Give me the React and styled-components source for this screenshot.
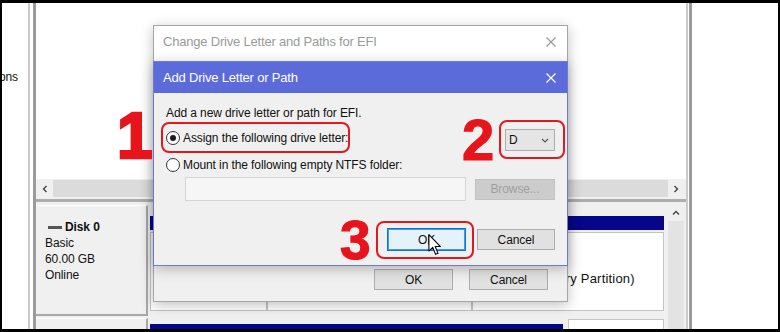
import React from 'react';
import styled, { createGlobalStyle } from 'styled-components';

const GlobalStyle = createGlobalStyle`
  html, body {
    margin: 0;
    padding: 0;
    background: #000;
  }
  body {
    font-family: "Liberation Sans", Arial, sans-serif;
  }
`;

const Screen = styled.div`
  position: relative;
  width: 780px;
  height: 332px;
  box-sizing: border-box;
  padding: 3px 2px;
  background: #000;
  overflow: hidden;
`;

const Desktop = styled.div`
  display: flex;
  height: 100%;
  background: #fff;
  overflow: hidden;
  font-size: 12px;
  letter-spacing: -0.1px;
  color: #111;
`;

const LeftPane = styled.div`
  flex: none;
  width: 26px;
  box-sizing: border-box;
  display: flex;
  justify-content: flex-end;
  align-items: flex-start;
  padding: 67px 10px 0 0;
  overflow: hidden;
  white-space: nowrap;
  line-height: 14px;
`;

const Rule = styled.div`
  flex: none;
  width: ${(p) => p.$w}px;
  box-sizing: border-box;
  border-left: 2px solid #cacaca;
  border-right: 3px solid #9b9b9b;
  background: #fff;
`;

const MainPane = styled.div`
  flex: none;
  width: 650px;
  display: flex;
  flex-direction: column;
`;

const ListView = styled.div`
  height: 176px;
  flex: none;
  background: #fff;
`;

const HScroll = styled.div`
  height: 19px;
  flex: none;
  display: flex;
  background: #f0f0f0;
`;

const ArrowBox = styled.div`
  flex: none;
  width: ${(p) => p.$w || 16}px;
  height: ${(p) => (p.$h ? `${p.$h}px` : 'auto')};
  display: flex;
  align-items: center;
  justify-content: center;
  color: #444;
`;

const Thumb = styled.div`
  flex: 1;
  margin: 1px 0;
  background: #dbdbdb;
`;

const Splitter = styled.div`
  height: 7px;
  flex: none;
  background: linear-gradient(#f0f0f0 0 1px, #adadad 1px 4px, #f0f0f0 4px);
`;

const GraphView = styled.div`
  flex: 1;
  display: flex;
  background: #f0f0f0;
  min-height: 0;
`;

const Rows = styled.div`
  flex: none;
  width: 628px;
  display: flex;
  flex-direction: column;
  gap: 2px;
`;

const DiskRow = styled.div`
  flex: none;
  height: ${(p) => p.$h}px;
  display: flex;
  gap: 2px;
`;

const DiskLabel = styled.div`
  flex: none;
  width: 112px;
  box-sizing: border-box;
  padding: 13px 0 0 9px;
  border-top: 1px solid #fff;
  border-right: 2px solid #a8a8a8;
  border-bottom: 2px solid #a8a8a8;
  background: #f0f0f0;
  line-height: 16px;
`;

const DiskTitle = styled.div`
  display: flex;
  align-items: center;
  gap: 3px;
  font-weight: bold;
`;

const DiskIcon = styled.span`
  width: 14px;
  height: 3px;
  margin-left: 3px;
  background: #555;
`;

const Partitions = styled.div`
  flex: 1;
  display: grid;
  grid-template-columns: ${(p) => p.$cols};
  column-gap: ${(p) => p.$gap || 0}px;
  padding: ${(p) => p.$pad};
`;

const Partition = styled.div`
  display: flex;
  flex-direction: column;
  margin-top: ${(p) => p.$offset || 0}px;
`;

const PartHeader = styled.div`
  height: 14px;
  flex: none;
  background: #06068a;
`;

const PartBody = styled.div`
  flex: 1;
  margin-top: ${(p) => p.$gap ?? 2}px;
  box-sizing: border-box;
  padding: 39px 0 0 4px;
  background: #fff;
  border: 1px solid #c4c4c4;
  font-size: 13px;
  letter-spacing: 0.2px;
  line-height: 14px;
  white-space: nowrap;
  overflow: hidden;
`;

const VScroll = styled.div`
  flex: none;
  width: 16px;
  margin-left: 4px;
  display: flex;
  flex-direction: column;
`;

const Track = styled.div`
  flex: 1;
  background: #e3e3e3;
`;

const RightPane = styled.div`
  flex: 1;
  background: #fff;
`;

/* dialogs */

const Dialog = styled.div`
  position: absolute;
  left: 153px;
  top: ${(p) => p.$top}px;
  width: 415px;
  height: ${(p) => p.$h}px;
  box-sizing: border-box;
  display: flex;
  flex-direction: column;
  border: 1px solid ${(p) => (p.$active ? '#6d79d9' : '#a6a6a6')};
  background: #f0f0f0;
  box-shadow: 0 3px 12px rgba(0, 0, 0, 0.25);
  font-size: 12px;
  letter-spacing: -0.1px;
  color: #111;
`;

const TitleBar = styled.div`
  flex: none;
  height: ${(p) => p.$h}px;
  box-sizing: border-box;
  display: flex;
  align-items: center;
  justify-content: space-between;
  padding: 0 11px ${(p) => p.$pb || 0}px 9px;
  background: ${(p) => (p.$active ? '#5b6bd9' : '#fff')};
  color: ${(p) => (p.$active ? '#fff' : '#9a9a9a')};
  font-size: 13px;
  letter-spacing: -0.2px;
  line-height: 16px;
`;

const OuterBody = styled.div`
  flex: 1;
  display: flex;
  justify-content: flex-end;
  align-items: flex-end;
  gap: 16px;
  padding: 0 19px 11px 0;
`;

const Body = styled.div`
  flex: 1;
  display: flex;
  flex-direction: column;
  padding: 13px 12px 0 12px;
  line-height: 14px;
`;

const Line = styled.div`
  white-space: nowrap;
`;

const Row = styled.div`
  display: flex;
  align-items: ${(p) => p.$align || 'center'};
  justify-content: ${(p) => p.$justify || 'flex-start'};
  gap: ${(p) => p.$gap || 0}px;
  margin: ${(p) => p.$m || '0'};
`;

const Ring = styled.div`
  flex: none;
  width: ${(p) => p.$w}px;
  height: ${(p) => p.$h}px;
  box-sizing: border-box;
  display: flex;
  align-items: ${(p) => p.$align || 'center'};
  gap: 3px;
  padding: ${(p) => p.$pad};
  margin: ${(p) => p.$m || '0'};
  border: 2px solid #e1191f;
  border-radius: 8px;
  white-space: nowrap;
`;

const Radio = styled.span`
  flex: none;
  width: 14px;
  height: 14px;
  box-sizing: border-box;
  border-radius: 50%;
  border: 1.5px solid #333;
  background: #fff;
  display: flex;
  align-items: center;
  justify-content: center;

  &::after {
    content: '';
    width: 6px;
    height: 6px;
    border-radius: 50%;
    background: ${(p) => (p.$checked ? '#1c1c1c' : 'transparent')};
  }
`;

const Select = styled.div`
  width: 50px;
  height: 22px;
  box-sizing: border-box;
  display: flex;
  align-items: center;
  justify-content: space-between;
  padding: 0 5px 0 3px;
  border: 1px solid #adadad;
  background: #e5e5e5;
  color: #111;

  svg {
    color: #555;
  }
`;

const TextField = styled.div`
  flex: none;
  width: 281px;
  height: 24px;
  box-sizing: border-box;
  border: 1px solid #d4d4d4;
  background: #f6f6f6;
`;

const Button = styled.div`
  flex: none;
  width: ${(p) => p.$w}px;
  height: ${(p) => p.$h}px;
  box-sizing: border-box;
  display: flex;
  align-items: center;
  justify-content: center;
  margin-top: ${(p) => p.$mt || 0}px;
  border: 1px solid ${(p) => (p.$focused ? '#0078d7' : p.$disabled ? '#c2c2c2' : '#adadad')};
  box-shadow: ${(p) => (p.$focused ? 'inset 0 0 0 1px #4b98e0' : 'none')};
  background: ${(p) => (p.$focused ? '#e5f1fb' : p.$disabled ? '#cccccc' : '#e1e1e1')};
  color: ${(p) => (p.$disabled ? '#9f9f9f' : '#111')};
`;

const Marker = styled.span`
  position: absolute;
  left: ${(p) => p.$x}px;
  top: ${(p) => p.$y}px;
  font-family: "Liberation Sans", Arial, sans-serif;
  font-weight: bold;
  font-size: ${(p) => p.$size}px;
  line-height: 1;
  letter-spacing: 0;
  color: #e8141c;
  -webkit-text-stroke: ${(p) => p.$stroke || 1.2}px #e8141c;
`;

const Cursor = styled.svg`
  position: absolute;
  left: 274px;
  top: 172px;
`;

const CloseIcon = () => (
  <svg width="10" height="10" viewBox="0 0 10 10">
    <path d="M0.5 0.5 L9.5 9.5 M9.5 0.5 L0.5 9.5" stroke="currentColor" strokeWidth="1.2" />
  </svg>
);

const Chevron = ({ dir = 'down', size = 8, weight = 1.4 }) => {
  const paths = {
    down: 'M1 3 L4 6 L7 3',
    up: 'M1 5.5 L4 2.5 L7 5.5',
    left: 'M5.5 1 L2.5 4 L5.5 7',
    right: 'M2.5 1 L5.5 4 L2.5 7',
  };
  return (
    <svg width={size} height={size} viewBox="0 0 8 8">
      <path d={paths[dir]} fill="none" stroke="currentColor" strokeWidth={weight} />
    </svg>
  );
};

const App = () => {
  return (
    <>
      <GlobalStyle />
      <Screen>
        <Desktop>
          <LeftPane>
            <span>Actions</span>
          </LeftPane>
          <Rule $w={8} />
          <MainPane>
            <ListView />
            <HScroll>
              <ArrowBox $w={17}>
                <Chevron dir="left" />
              </ArrowBox>
              <Thumb />
              <ArrowBox $w={16}>
                <Chevron dir="right" />
              </ArrowBox>
              <ArrowBox $w={2} />
            </HScroll>
            <Splitter />
            <GraphView>
              <Rows>
                <DiskRow $h={111}>
                  <DiskLabel>
                    <DiskTitle>
                      <DiskIcon />
                      Disk 0
                    </DiskTitle>
                    <div>Basic</div>
                    <div>60.00 GB</div>
                    <div>Online</div>
                  </DiskLabel>
                  <Partitions $cols="117px 205px 1fr" $pad="11px 0 5px 0">
                    <Partition>
                      <PartHeader />
                      <PartBody />
                    </Partition>
                    <Partition>
                      <PartHeader />
                      <PartBody />
                    </Partition>
                    <Partition>
                      <PartHeader />
                      <PartBody>Healthy (Primary Partition)</PartBody>
                    </Partition>
                  </Partitions>
                </DiskRow>
                <DiskRow $h={40}>
                  <DiskLabel />
                  <Partitions $cols="413px 1fr" $gap={5} $pad="1px 0 0 0">
                    <Partition $offset={5}>
                      <PartHeader />
                    </Partition>
                    <Partition>
                      <PartBody $gap={0} />
                    </Partition>
                  </Partitions>
                </DiskRow>
              </Rows>
              <VScroll>
                <ArrowBox $w={16} $h={16}>
                  <Chevron dir="up" />
                </ArrowBox>
                <Track />
              </VScroll>
            </GraphView>
          </MainPane>
          <Rule $w={6} />
          <RightPane />
        </Desktop>

        <Dialog $top={25} $h={277}>
          <TitleBar $h={35} $pb={4}>
            <span>Change Drive Letter and Paths for EFI</span>
            <CloseIcon />
          </TitleBar>
          <OuterBody>
            <Button $w={79} $h={21}>OK</Button>
            <Button $w={79} $h={21}>Cancel</Button>
          </OuterBody>
        </Dialog>

        <Dialog $top={61} $h={205} $active>
          <TitleBar $h={31} $active>
            <span>Add Drive Letter or Path</span>
            <CloseIcon />
          </TitleBar>
          <Body>
            <Line>Add a new drive letter or path for EFI.</Line>
            <Row $justify="space-between" $align="flex-start" $m="0 -10px 0 -5px">
              <Ring $w={189} $h={31} $pad="0 0 0 3px" $m="2px 0 0 0">
                <Radio $checked />
                <span>Assign the following drive letter:</span>
              </Ring>
              <Ring $w={66} $h={39} $pad="0 0 0 4px">
                <Select>
                  <span>D</span>
                  <Chevron dir="down" weight={1.1} />
                </Select>
              </Ring>
            </Row>
            <Row $gap={3} $m="-1px 0 0 0">
              <Radio />
              <Line>Mount in the following empty NTFS folder:</Line>
            </Row>
            <Row $gap={9} $m="5px 0 0 19px">
              <TextField />
              <Button $w={80} $h={21} $disabled>Browse...</Button>
            </Row>
            <Row $justify="flex-end" $align="flex-start" $gap={3} $m="20px 0 0 0">
              <Ring $w={98} $h={38} $align="flex-start" $pad="5px 0 0 9px">
                <Button $w={79} $h={23} $focused>OK</Button>
              </Ring>
              <Button $w={78} $h={21} $mt={8}>Cancel</Button>
            </Row>
          </Body>
          <Marker $x={-37} $y={42} $size={64} $stroke={2.6}>1</Marker>
          <Marker $x={308} $y={49} $size={58}>2</Marker>
          <Marker $x={186} $y={151} $size={55}>3</Marker>
          <Cursor width="15" height="22" viewBox="0 0 13 20">
            <path
              d="M0.5 0.5 L0.5 15.5 L4 12.2 L6.6 18.5 L8.8 17.6 L6.2 11.4 L11 11.4 Z"
              fill="#fff"
              stroke="#000"
              strokeWidth="1"
              strokeLinejoin="round"
            />
          </Cursor>
        </Dialog>
      </Screen>
    </>
  );
};

export default App;
